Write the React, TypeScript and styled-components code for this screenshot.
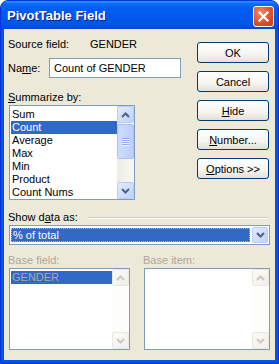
import styled, { createGlobalStyle } from "styled-components";

const GlobalStyle = createGlobalStyle`
  body {
    margin: 0;
    background: #ffffff;
  }
`;

const summarizeItems = ["Sum", "Count", "Average", "Max", "Min", "Product", "Count Nums"];

const Arrow = ({ dir, color }: { dir: "up" | "down"; color: string }) => (
  <svg width="9" height="6" viewBox="0 0 9 6">
    <path
      d={dir === "up" ? "M1 5 L4.5 1.5 L8 5" : "M1 1 L4.5 4.5 L8 1"}
      fill="none"
      stroke={color}
      strokeWidth="2"
    />
  </svg>
);

const ScrollBar = ({ disabled }: { disabled?: boolean }) => {
  const c = disabled ? "#CAC8BB" : "#4D6185";
  return (
    <Track $disabled={disabled}>
      <ArrowBtn $disabled={disabled}>
        <Arrow dir="up" color={c} />
      </ArrowBtn>
      {!disabled && (
        <Thumb>
          <Grip />
          <Grip />
          <Grip />
          <Grip />
        </Thumb>
      )}
      <Spacer />
      <ArrowBtn $disabled={disabled}>
        <Arrow dir="down" color={c} />
      </ArrowBtn>
    </Track>
  );
};

const App = () => {
  return (
    <>
      <GlobalStyle />
      <Window>
        <TitleBar>
          <Title>PivotTable Field</Title>
          <CloseButton>
            <svg width="11" height="11" viewBox="0 0 11 11">
              <path d="M1.5 1.5 L9.5 9.5 M9.5 1.5 L1.5 9.5" stroke="#fff" strokeWidth="2.2" strokeLinecap="square" />
            </svg>
          </CloseButton>
        </TitleBar>
        <Body>
          <TopSection>
            <LeftColumn>
              <Row>
                <Label $width={82}>Source field:</Label>
                <Text>GENDER</Text>
              </Row>
              <NameRow>
                <Label $width={41}>
                  Na<u>m</u>e:
                </Label>
                <TextInput>Count of GENDER</TextInput>
              </NameRow>
              <SectionLabel>
                <u>S</u>ummarize by:
              </SectionLabel>
              <ListBox $width={126} $height={95}>
                <Items>
                  {summarizeItems.map((item) => (
                    <Item key={item} $selected={item === "Count"}>
                      {item}
                    </Item>
                  ))}
                </Items>
                <ScrollBar />
              </ListBox>
            </LeftColumn>
            <ButtonColumn>
              <Button>OK</Button>
              <Button>Cancel</Button>
              <Button>
                <u>H</u>ide
              </Button>
              <Button>
                <u>N</u>umber...
              </Button>
              <Button>
                <u>O</u>ptions &gt;&gt;
              </Button>
            </ButtonColumn>
          </TopSection>
          <ShowRow>
            <Label>
              Show d<u>a</u>ta as:
            </Label>
            <Etched />
          </ShowRow>
          <Dropdown>
            <DropValue>% of total</DropValue>
            <DropButton>
              <Arrow dir="down" color="#4D6185" />
            </DropButton>
          </Dropdown>
          <BaseGrid>
            <SectionLabel $disabled>Base field:</SectionLabel>
            <SectionLabel $disabled>Base item:</SectionLabel>
            <ListBox $height={82}>
              <Items>
                <Item $selected $disabled>
                  GENDER
                </Item>
              </Items>
              <ScrollBar disabled />
            </ListBox>
            <ListBox $height={82}>
              <Items />
              <ScrollBar disabled />
            </ListBox>
          </BaseGrid>
        </Body>
      </Window>
    </>
  );
};

export default App;

const Window = styled.div`
  width: 279px;
  height: 364px;
  box-sizing: border-box;
  display: flex;
  flex-direction: column;
  background: #0055e5;
  border: 1px solid #0831d9;
  border-radius: 8px 8px 0 0;
  overflow: hidden;
  font-family: "Liberation Sans", Arial, sans-serif;
  font-size: 11px;
  color: #000;
`;

const TitleBar = styled.div`
  height: 28px;
  display: flex;
  align-items: center;
  justify-content: space-between;
  padding: 0 4px 0 6px;
  background: linear-gradient(
    to bottom,
    #3d95ff 0%,
    #0a6af8 10%,
    #005cf0 30%,
    #0058ea 70%,
    #0052e0 90%,
    #0046c8 100%
  );
`;

const Title = styled.div`
  color: #fff;
  font-weight: 700;
  font-size: 13px;
  text-shadow: 1px 1px 0 #0a1e8a;
  margin-top: 1px;
`;

const CloseButton = styled.div`
  width: 19px;
  height: 19px;
  border: 1px solid #fff;
  border-radius: 3px;
  background: radial-gradient(circle at 35% 30%, #f08a66 0%, #e05a36 45%, #c53b14 100%);
  display: flex;
  align-items: center;
  justify-content: center;
  margin-top: 2px;
`;

const Body = styled.div`
  flex: 1;
  margin: 0 3px 3px 3px;
  background: #ece9d8;
  padding: 7px 5px 0 5px;
  display: flex;
  flex-direction: column;
`;

const TopSection = styled.div`
  display: flex;
  justify-content: space-between;
`;

const LeftColumn = styled.div`
  display: flex;
  flex-direction: column;
`;

const Row = styled.div`
  display: flex;
  align-items: center;
  height: 16px;
`;

const NameRow = styled(Row)`
  height: 20px;
  margin-top: 6px;
`;

const Label = styled.div<{ $width?: number }>`
  width: ${(p) => (p.$width ? `${p.$width}px` : "auto")};
  margin-left: -1px;
  white-space: nowrap;
`;

const Text = styled.div`
  white-space: nowrap;
`;

const TextInput = styled.div`
  width: 132px;
  height: 20px;
  box-sizing: border-box;
  border: 1px solid #7f9db9;
  background: #fff;
  padding: 0 4px;
  display: flex;
  align-items: center;
`;

const SectionLabel = styled.div<{ $disabled?: boolean }>`
  height: 16px;
  line-height: 16px;
  margin-left: -1px;
  margin-top: 11px;
  color: ${(p) => (p.$disabled ? "#aca899" : "#000")};
`;

const ListBox = styled.div<{ $width?: number; $height: number }>`
  width: ${(p) => (p.$width ? `${p.$width}px` : "auto")};
  height: ${(p) => p.$height}px;
  box-sizing: border-box;
  border: 1px solid #7f9db9;
  background: #fff;
  display: flex;
`;

const Items = styled.div`
  flex: 1;
  padding: 2px 0 0 1px;
  overflow: hidden;
`;

const Item = styled.div<{ $selected?: boolean; $disabled?: boolean }>`
  height: 13px;
  line-height: 13px;
  padding-left: 1px;
  white-space: nowrap;
  background: ${(p) => (p.$selected ? "#316ac5" : "transparent")};
  color: ${(p) => (p.$disabled ? "#aca899" : p.$selected ? "#fff" : "#000")};
`;

const Track = styled.div<{ $disabled?: boolean }>`
  width: 17px;
  display: flex;
  flex-direction: column;
  background: ${(p) => (p.$disabled ? "#fdfdfa" : "linear-gradient(to right, #eeede5, #f8f7f2)")};
`;

const ArrowBtn = styled.div<{ $disabled?: boolean }>`
  height: 17px;
  box-sizing: border-box;
  border: 1px solid ${(p) => (p.$disabled ? "#e9e8e0" : "#b8cdf7")};
  border-radius: 2px;
  background: ${(p) =>
    p.$disabled
      ? "linear-gradient(135deg, #fbfbf8, #f0efe8)"
      : "linear-gradient(135deg, #e3ecfe, #bdd1fb)"};
  display: flex;
  align-items: center;
  justify-content: center;
`;

const Thumb = styled.div`
  height: 35px;
  margin-top: 1px;
  box-sizing: border-box;
  border: 1px solid #a9c1f5;
  border-radius: 2px;
  background: linear-gradient(to right, #cedcfd, #bccefa);
  display: flex;
  flex-direction: column;
  align-items: center;
  justify-content: center;
  gap: 1px;
`;

const Grip = styled.div`
  width: 7px;
  height: 1px;
  background: #8cacf0;
  box-shadow: 0 1px 0 #eef4fe;
`;

const Spacer = styled.div`
  flex: 1;
`;

const ButtonColumn = styled.div`
  display: flex;
  flex-direction: column;
  gap: 8px;
  margin-top: 6px;
  margin-right: 1px;
`;

const Button = styled.div`
  width: 72px;
  height: 21px;
  box-sizing: border-box;
  border: 1px solid #003c74;
  border-radius: 3px;
  background: linear-gradient(to bottom, #ffffff 0%, #f5f4ef 60%, #e3e0d6 100%);
  display: flex;
  align-items: center;
  justify-content: center;
  white-space: nowrap;
`;

const ShowRow = styled.div`
  display: flex;
  align-items: center;
  height: 16px;
  margin-top: 9px;
`;

const Etched = styled.div`
  flex: 1;
  margin: 0 3px 0 10px;
  height: 1px;
  background: #d0d0bf;
  box-shadow: 0 1px 0 #ffffff;
`;

const Dropdown = styled.div`
  height: 20px;
  box-sizing: border-box;
  border: 1px solid #7f9db9;
  background: #fff;
  display: flex;
  align-items: stretch;
  padding: 1px;
  gap: 2px;
`;

const DropValue = styled.div`
  flex: 1;
  margin: 1px 0;
  background: #316ac5;
  color: #fff;
  outline: 1px dotted #e6b04a;
  outline-offset: -1px;
  display: flex;
  align-items: center;
  padding-left: 2px;
`;

const DropButton = styled(ArrowBtn)`
  width: 16px;
  height: auto;
`;

const BaseGrid = styled.div`
  display: grid;
  grid-template-columns: 121px 126px;
  column-gap: 14px;
  & > ${SectionLabel} {
    margin-top: 7px;
  }
`;
